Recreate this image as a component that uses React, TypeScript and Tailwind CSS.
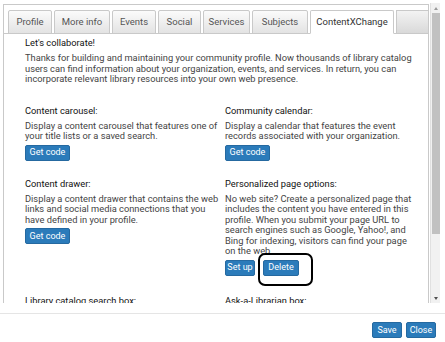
import React from "react";

const tabs = [
  { label: "Profile", w: "w-[44px]" },
  { label: "More info", w: "w-[56px]" },
  { label: "Events", w: "w-[44px]" },
  { label: "Social", w: "w-[43px]" },
  { label: "Services", w: "w-[47px]" },
  { label: "Subjects", w: "w-[56px]" },
];

function Btn({ children, w }: { children: React.ReactNode; w: string }) {
  return (
    <button
      className={`${w} h-[16px] rounded-[2px] bg-[#2b7bba] border border-[#2569a0] text-white text-[9px] leading-none flex items-center justify-center`}
    >
      {children}
    </button>
  );
}

function Heading({ children }: { children: React.ReactNode }) {
  return <div className="text-[#111] text-[9.3px] leading-[10.5px]">{children}</div>;
}

function Para({ children }: { children: React.ReactNode }) {
  return <p className="mt-[4.5px] text-[#444] text-[9.3px] leading-[10.5px]">{children}</p>;
}

export default function App() {
  return (
    <div className="w-[445px] h-[342px] bg-white relative overflow-hidden font-['Roboto',sans-serif]">
      {/* scroll region */}
      <div className="flex h-[303px]">
        <div className="ml-[3px] mt-[4px] w-[426px] border border-b-0 border-[#c9c9c9] overflow-hidden flex flex-col">
          {/* tab bar */}
          <div className="flex items-end pl-[4px] pt-[4px] gap-[2px] border-b border-[#c9c9c9] h-[29px] shrink-0">
            {tabs.map((t) => (
              <div
                key={t.label}
                className={`${t.w} h-[24px] -mb-px rounded-t-[2px] border border-[#c9c9c9] bg-gradient-to-b from-[#fbfbfb] to-[#e3e3e3] text-[#555] text-[9.5px] flex items-center justify-center`}
              >
                {t.label}
              </div>
            ))}
            <div className="w-[84px] h-[24px] -mb-px rounded-t-[2px] border border-[#c9c9c9] border-b-white bg-white text-[#333] text-[9.5px] flex items-center justify-center">
              ContentXChange
            </div>
            <div className="flex-1 h-[24px] -mb-px border-t border-l border-b border-[#c9c9c9] bg-gradient-to-b from-[#f3f3f3] to-[#d9d9d9]" />
          </div>
          {/* content */}
          <div className="pl-[21px] pr-[10px] pt-[4px]">
            <Heading>Let's collaborate!</Heading>
            <Para>
              Thanks for building and maintaining your community profile. Now thousands of library catalog users can
              find information about your organization, events, and services. In return, you can incorporate relevant
              library resources into your own web presence.
            </Para>
            <div className="grid grid-cols-[200px_192px] mt-[21px]">
              <div>
                <Heading>Content carousel:</Heading>
                <Para>
                  Display a content carousel that features one of
                  <br />
                  your title lists or a saved search.
                </Para>
                <div className="mt-[3px]">
                  <Btn w="w-[45px]">Get code</Btn>
                </div>
              </div>
              <div>
                <Heading>Community calendar:</Heading>
                <Para>Display a calendar that features the event records associated with your organization.</Para>
                <div className="mt-[3px]">
                  <Btn w="w-[45px]">Get code</Btn>
                </div>
              </div>
            </div>
            <div className="grid grid-cols-[200px_192px] mt-[18px]">
              <div>
                <Heading>Content drawer:</Heading>
                <Para>
                  Display a content drawer that contains the web links and social media connections that you have
                  defined in your profile.
                </Para>
                <div className="mt-[3px]">
                  <Btn w="w-[45px]">Get code</Btn>
                </div>
              </div>
              <div>
                <Heading>Personalized page options:</Heading>
                <Para>
                  No web site? Create a personalized page that includes the content you have entered in this profile.
                  When you submit your page URL to search engines such as Google, Yahoo!, and Bing for indexing,
                  visitors can find your page on the web.
                </Para>
                <div className="mt-[3px] flex gap-[8px]">
                  <Btn w="w-[30px]">Set up</Btn>
                  <Btn w="w-[36px]">Delete</Btn>
                </div>
              </div>
            </div>
            <div className="grid grid-cols-[200px_192px] mt-[20px]">
              <Heading>Library catalog search box:</Heading>
              <Heading>Ask-a-Librarian box:</Heading>
            </div>
          </div>
        </div>
        {/* scrollbar */}
        <div className="ml-[1px] mt-[3px] w-[10px] bg-[#f1f1f1] border-l border-[#e0e0e0] flex flex-col items-center">
          <div className="h-[10px] flex items-center justify-center">
            <div className="w-0 h-0 border-l-[2.5px] border-r-[2.5px] border-b-[3px] border-l-transparent border-r-transparent border-b-[#9a9a9a]" />
          </div>
          <div className="w-[8px] h-[221px] bg-[#c1c1c1]" />
          <div className="flex-1" />
          <div className="h-[10px] flex items-center justify-center">
            <div className="w-0 h-0 border-l-[2.5px] border-r-[2.5px] border-t-[3px] border-l-transparent border-r-transparent border-t-[#505050]" />
          </div>
        </div>
      </div>
      <div className="h-[10px]" />
      {/* footer */}
      <div className="border-t border-[#e5e5e5] h-[29px] flex justify-end items-start pt-[8px] pr-[9px] gap-[4px]">
        <Btn w="w-[30px]">Save</Btn>
        <Btn w="w-[30px]">Close</Btn>
      </div>
      {/* annotation */}
      <div className="absolute left-[258px] top-[253px] w-[55px] h-[33px] border-2 border-black rounded-[7px]" />
    </div>
  );
}
